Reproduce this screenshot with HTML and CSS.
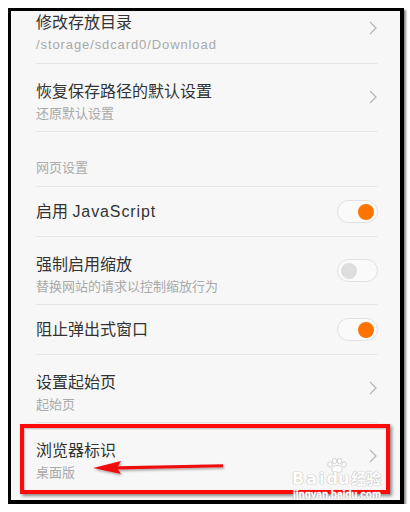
FILE: index.html
```html
<!DOCTYPE html>
<html lang="zh-CN">
<head>
<meta charset="utf-8">
<link rel="stylesheet" href="styles.css">
</head>
<body>
<div class="frame">
  <div class="list">
    <div class="row two first">
      <div class="texts">
        <div class="title">修改存放目录</div>
        <div class="sub"><span class="latin">/storage/sdcard0/Download</span></div>
      </div>
      <svg class="chev" width="8" height="14" viewBox="0 0 8 14"><polyline points="1,1 7,7 1,13" fill="none" stroke="#b4b4b4" stroke-width="1.2"/></svg>
    </div>
    <div class="row two">
      <div class="texts">
        <div class="title">恢复保存路径的默认设置</div>
        <div class="sub">还原默认设置</div>
      </div>
      <svg class="chev" width="8" height="14" viewBox="0 0 8 14"><polyline points="1,1 7,7 1,13" fill="none" stroke="#b4b4b4" stroke-width="1.2"/></svg>
    </div>
    <div class="row header">网页设置</div>
    <div class="row one">
      <div class="title">启用 <span class="latin">JavaScript</span></div>
      <div class="toggle on"><span class="knob"></span></div>
    </div>
    <div class="row two">
      <div class="texts">
        <div class="title">强制启用缩放</div>
        <div class="sub">替换网站的请求以控制缩放行为</div>
      </div>
      <div class="toggle"><span class="knob"></span></div>
    </div>
    <div class="row one">
      <div class="title">阻止弹出式窗口</div>
      <div class="toggle on"><span class="knob"></span></div>
    </div>
    <div class="row two">
      <div class="texts">
        <div class="title">设置起始页</div>
        <div class="sub">起始页</div>
      </div>
      <svg class="chev" width="8" height="14" viewBox="0 0 8 14"><polyline points="1,1 7,7 1,13" fill="none" stroke="#b4b4b4" stroke-width="1.2"/></svg>
    </div>
    <div class="row two last">
      <div class="texts">
        <div class="title">浏览器标识</div>
        <div class="sub">桌面版</div>
      </div>
      <svg class="chev" width="8" height="14" viewBox="0 0 8 14"><polyline points="1,1 7,7 1,13" fill="none" stroke="#b4b4b4" stroke-width="1.2"/></svg>
    </div>
  </div>

  <div class="highlight"></div>
  <svg class="arrow" width="150" height="24" viewBox="0 0 150 24">
    <defs>
      <filter id="sh" x="-10%" y="-50%" width="120%" height="200%">
        <feDropShadow dx="1" dy="1.5" stdDeviation="1" flood-color="#000" flood-opacity="0.35"/>
      </filter>
    </defs>
    <g filter="url(#sh)" fill="#ee1111">
      <path d="M2 12 L30 5 L27 10.2 L132 8.2 L132 11.2 L27 13.6 L30 18 Z"/>
    </g>
  </svg>

  <div class="watermark">
    <svg class="paw" width="22" height="15" viewBox="0 0 22 15">
      <g fill="#ffffff" stroke="#cccccc" stroke-width="0.9">
        <ellipse cx="4" cy="6.5" rx="2.3" ry="2.7"/>
        <ellipse cx="8.5" cy="3" rx="2.3" ry="2.6"/>
        <ellipse cx="13.5" cy="3" rx="2.3" ry="2.6"/>
        <ellipse cx="18" cy="6.5" rx="2.3" ry="2.7"/>
        <path d="M11 7.5 C7 7.5 5.5 11 6 13 C6.5 14.6 9 14.2 11 14.2 C13 14.2 15.5 14.6 16 13 C16.5 11 15 7.5 11 7.5 Z"/>
      </g>
    </svg>
    <div class="wm-logo"><span class="wm-bai">Bai</span><span class="wm-du">du</span><span class="wm-cn">经验</span></div>
    <div class="wm-url">jingyan.baidu.com</div>
  </div>
</div>
</body>
</html>
```

FILE: styles.css
```css
html, body {
  margin: 0;
  padding: 0;
  background: #ffffff;
}

body {
  font-family: "Liberation Sans", "Noto Sans CJK SC", sans-serif;
}

.frame {
  position: relative;
  margin: 8px 0 0 8px;
  width: 389px;
  height: 489px;
  border-style: solid;
  border-color: #000;
  border-width: 3px 4px 4px 3px;
  background: #f7f7f7;
  box-shadow: 2px 2px 2px #8a8a8a;
  overflow: hidden;
}

.list {
  margin-top: -16px;
  display: flex;
  flex-direction: column;
}

.row {
  margin: 0 22px 0 25px;
  border-bottom: 1px solid #e7e7e7;
  display: flex;
  align-items: center;
  justify-content: space-between;
  box-sizing: border-box;
}

.row.two {
  height: 68px;
}

.row.two.first {
  height: 69px;
}

.row.one {
  height: 50px;
}

.row.header {
  height: 55px;
  align-items: flex-end;
  padding-bottom: 9px;
  font-size: 13px;
  line-height: 18px;
  color: #ababab;
}

.row.last {
  border-bottom: none;
}

.texts {
  display: flex;
  flex-direction: column;
  gap: 2px;
  padding-top: 8px;
}

.title {
  font-size: 16px;
  line-height: 22px;
  color: #333333;
}

.sub {
  font-size: 13px;
  line-height: 18px;
  color: #a9a9a9;
}

.latin {
  letter-spacing: 0.9px;
}

.chev {
  display: block;
  margin-right: 1px;
  margin-top: -2px;
}

.toggle {
  width: 33px;
  height: 21px;
  border: 1px solid #e1e1e1;
  border-radius: 12px;
  background: #fafafa;
  display: flex;
  align-items: center;
  padding: 0 3px;
  box-sizing: content-box;
}

.toggle .knob {
  width: 16px;
  height: 16px;
  border-radius: 50%;
  background: #dedede;
}

.toggle.on {
  justify-content: flex-end;
}

.toggle.on .knob {
  background: #ff7300;
}

.highlight {
  position: absolute;
  left: 9px;
  top: 413px;
  width: 370px;
  height: 70px;
  box-sizing: border-box;
  border: 4px solid #ff0a0a;
  box-shadow: 2px 2px 3px rgba(0, 0, 0, 0.45), inset 1px 1px 2px rgba(0, 0, 0, 0.25);
}

.arrow {
  position: absolute;
  left: 80px;
  top: 445px;
}

.watermark {
  position: absolute;
  left: 281px;
  top: 447px;
  width: 110px;
  height: 44px;
  color: #ffffff;
  text-shadow: 0 0 1px #bdbdbd, 0 0 1px #bdbdbd, 0 0 1px #bdbdbd;
}

.paw {
  position: absolute;
  left: 34px;
  top: 0;
}

.wm-logo {
  position: absolute;
  left: 0;
  top: 11px;
  white-space: nowrap;
  font-family: "DejaVu Sans", "Noto Sans CJK SC", sans-serif;
  font-weight: bold;
  font-size: 16px;
  line-height: 18px;
}

.wm-bai {
  letter-spacing: 2px;
}

.wm-du {
  letter-spacing: 0;
}

.wm-cn {
  margin-left: 2px;
  font-family: "Noto Sans CJK SC", sans-serif;
  font-size: 15px;
}

.wm-url {
  position: absolute;
  left: 1px;
  top: 31px;
  white-space: nowrap;
  font-size: 10px;
  line-height: 12px;
  font-weight: bold;
}
```
